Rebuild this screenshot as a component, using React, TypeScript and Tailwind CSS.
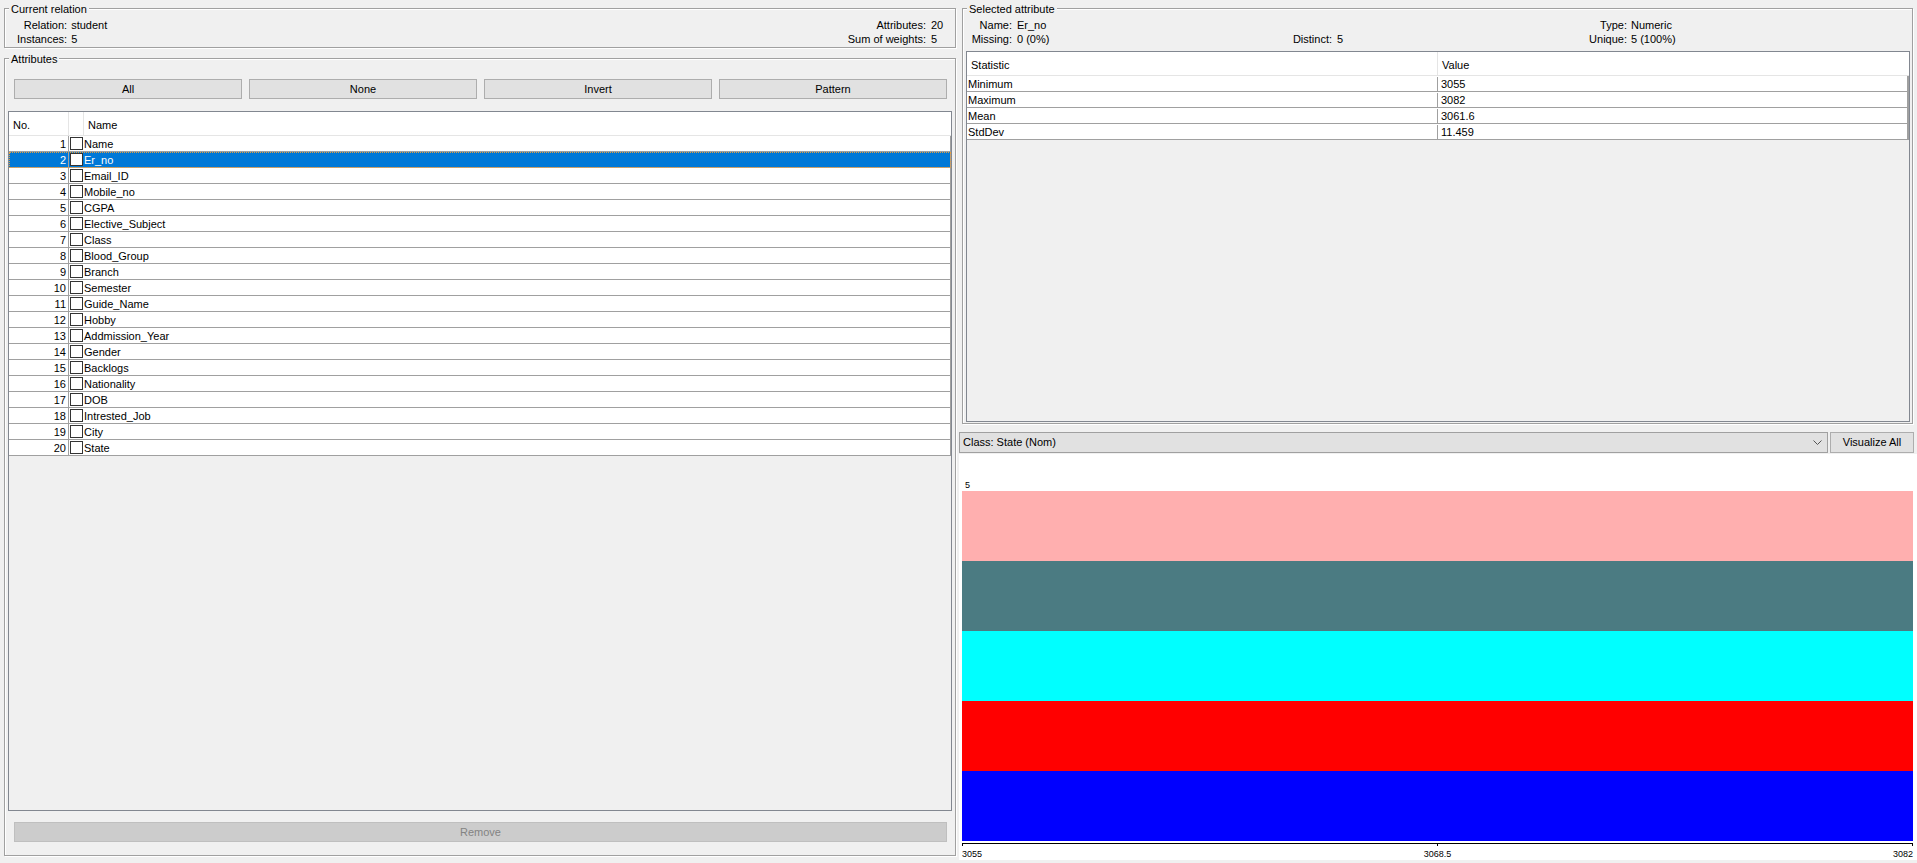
import React from 'react';

const attributes = [
  'Name', 'Er_no', 'Email_ID', 'Mobile_no', 'CGPA', 'Elective_Subject', 'Class',
  'Blood_Group', 'Branch', 'Semester', 'Guide_Name', 'Hobby', 'Addmission_Year',
  'Gender', 'Backlogs', 'Nationality', 'DOB', 'Intrested_Job', 'City', 'State',
];

const stats = [
  ['Minimum', '3055'],
  ['Maximum', '3082'],
  ['Mean', '3061.6'],
  ['StdDev', '11.459'],
];

const bars = ['bg-[#ffafaf]', 'bg-[#4b7b82]', 'bg-[#00ffff]', 'bg-[#ff0000]', 'bg-[#0000ff]'];

const Legend: React.FC<{ title: string }> = ({ title }) => (
  <legend className="ml-[4px] px-[2px] leading-[14px] pt-[1px] bg-[#f0f0f0]">{title}</legend>
);

const WinButton: React.FC<{ label: string }> = ({ label }) => (
  <button className="h-[20px] bg-[#e1e1e1] border border-[#adadad] leading-[18px] text-black">
    {label}
  </button>
);

const App: React.FC = () => {
  const selected = 2;

  return (
    <div className="w-full h-[863px] overflow-hidden bg-[#f0f0f0] text-[11px] text-black font-['Liberation_Sans',Arial,sans-serif] flex">
      {/* Left side */}
      <div className="w-[959px] shrink-0 pl-[4px] pr-[3px] pt-[1px] pb-[7px] flex flex-col">
        <fieldset className="border border-[#a0a0a0] shadow-[inset_1px_1px_0_#fff,1px_1px_0_#fff]">
          <Legend title="Current relation" />
          <div className="pt-[2px] pb-[1px] pl-[12px] pr-[13px] flex justify-between leading-[14px]">
            <div className="grid grid-cols-[auto_auto] gap-x-[4px]">
              <span className="text-right">Relation:</span>
              <span>student</span>
              <span className="text-right">Instances:</span>
              <span>5</span>
            </div>
            <div className="grid grid-cols-[auto_11px] gap-x-[5px]">
              <span className="text-right">Attributes:</span>
              <span>20</span>
              <span className="text-right">Sum of weights:</span>
              <span>5</span>
            </div>
          </div>
        </fieldset>

        <fieldset className="mt-[3px] flex-1 min-h-0 border border-[#a0a0a0] shadow-[inset_1px_1px_0_#fff,1px_1px_0_#fff]">
          <Legend title="Attributes" />
          <div className="h-full flex flex-col px-[3px] pt-[13px] pb-[13px]">
            <div className="ml-[6px] mr-[5px] grid grid-cols-4 gap-[7px]">
              <WinButton label="All" />
              <WinButton label="None" />
              <WinButton label="Invert" />
              <WinButton label="Pattern" />
            </div>

            <div className="mt-[12px] flex-1 min-h-0 border border-[#828790] bg-[#f0f0f0] flex flex-col">
              <div className="h-[24px] shrink-0 bg-white border-b border-[#e5e5e5] flex leading-[26px]">
                <div className="w-[59px] pl-[4px]">No.</div>
                <div className="w-[15px] border-l border-[#e5e5e5]" />
                <div className="flex-1 border-l border-[#e5e5e5] pl-[4px]">Name</div>
              </div>
              {attributes.map((name, i) => {
                const isSel = i + 1 === selected;
                return (
                  <div
                    key={name}
                    className={`h-[16px] shrink-0 flex border-b border-r border-[#a0a0a0] leading-[15px] ${
                      isSel
                        ? 'bg-[#0078d7] text-white outline-1 outline-dotted outline-[#e8a040] -outline-offset-1'
                        : 'bg-white'
                    }`}
                  >
                    <div className="w-[59px] text-right pr-[2px] pt-[1px] leading-[14px]">{i + 1}</div>
                    <div className="w-[15px] border-l border-[#a0a0a0] flex items-center pl-[1px]">
                      <div className="w-[13px] h-[13px] bg-white border border-[#333333]" />
                    </div>
                    <div className="flex-1 pl-[1px] pt-[1px] leading-[14px]">{name}</div>
                  </div>
                );
              })}
            </div>

            <button
              disabled
              className="mt-[11px] ml-[6px] mr-[5px] h-[20px] bg-[#cccccc] border border-[#bfbfbf] text-[#838383] leading-[18px]"
            >
              Remove
            </button>
          </div>
        </fieldset>
      </div>

      {/* Right side */}
      <div className="flex-1 min-w-0 pt-[1px] pb-[3px] flex flex-col">
        <fieldset className="ml-[3px] mr-[4px] h-[423px] shrink-0 border border-[#a0a0a0] shadow-[inset_1px_1px_0_#fff,1px_1px_0_#fff]">
          <Legend title="Selected attribute" />
          <div className="pt-[2px] grid grid-cols-[49px_278px_42px_248px_47px_1fr] leading-[14px]">
            <span className="text-right">Name:</span>
            <span className="pl-[5px]">Er_no</span>
            <span />
            <span />
            <span className="text-right">Type:</span>
            <span className="pl-[4px]">Numeric</span>
            <span className="text-right">Missing:</span>
            <span className="pl-[5px]">0 (0%)</span>
            <span className="text-right">Distinct:</span>
            <span className="pl-[5px]">5</span>
            <span className="text-right">Unique:</span>
            <span className="pl-[4px]">5 (100%)</span>
          </div>
          <div className="mt-[5px] ml-[3px] mr-[2px] h-[371px] border border-[#828790] bg-[#f0f0f0] flex flex-col">
            <div className="h-[24px] shrink-0 bg-white border-b border-[#e5e5e5] flex leading-[26px]">
              <div className="w-[470px] pl-[4px]">Statistic</div>
              <div className="flex-1 border-l border-[#e5e5e5] pl-[4px]">Value</div>
            </div>
            {stats.map(([k, v]) => (
              <div key={k} className="h-[16px] shrink-0 bg-white flex border-b border-r-2 border-[#a0a0a0] pt-[1px] leading-[14px]">
                <div className="w-[470px] pl-[1px]">{k}</div>
                <div className="flex-1 border-l border-[#a0a0a0] pl-[3px]">{v}</div>
              </div>
            ))}
          </div>
        </fieldset>

        <div className="mt-[8px] mr-[3px] h-[21px] shrink-0 flex gap-[2px]">
          <div className="flex-1 bg-[#e1e1e1] border border-[#a0a0a0] flex items-center justify-between pl-[3px] pr-[5px]">
            <span>Class: State (Nom)</span>
            <svg width="9" height="6" viewBox="0 0 9 6">
              <path d="M0.5 0.5 L4.5 4.5 L8.5 0.5" fill="none" stroke="#555" strokeWidth="1" />
            </svg>
          </div>
          <button className="w-[84px] bg-[#e1e1e1] border border-[#adadad] leading-[19px]">Visualize All</button>
        </div>

        <div className="mt-[1px] flex-1 min-h-0 bg-white flex flex-col pt-[26px]">
          <div className="h-[11px] pl-[6px] text-[9px] leading-[11px]">5</div>
          <div className="ml-[3px] mr-[4px] flex flex-col">
            {bars.map((c) => (
              <div key={c} className={`h-[70px] ${c}`} />
            ))}
          </div>
          <div className="ml-[3px] mr-[4px] mt-[2px] h-[1px] bg-black" />
          <div className="ml-[3px] mr-[4px] h-[5px] flex justify-between">
            <div className="w-[1px] bg-black" />
            <div className="w-[1px] bg-black" />
            <div className="w-[1px] bg-black" />
          </div>
          <div className="ml-[3px] mr-[4px] mt-[3px] grid grid-cols-3 text-[9px] leading-[11px]">
            <span className="text-left">3055</span>
            <span className="text-center">3068.5</span>
            <span className="text-right">3082</span>
          </div>
        </div>
      </div>
    </div>
  );
};

export default App;
